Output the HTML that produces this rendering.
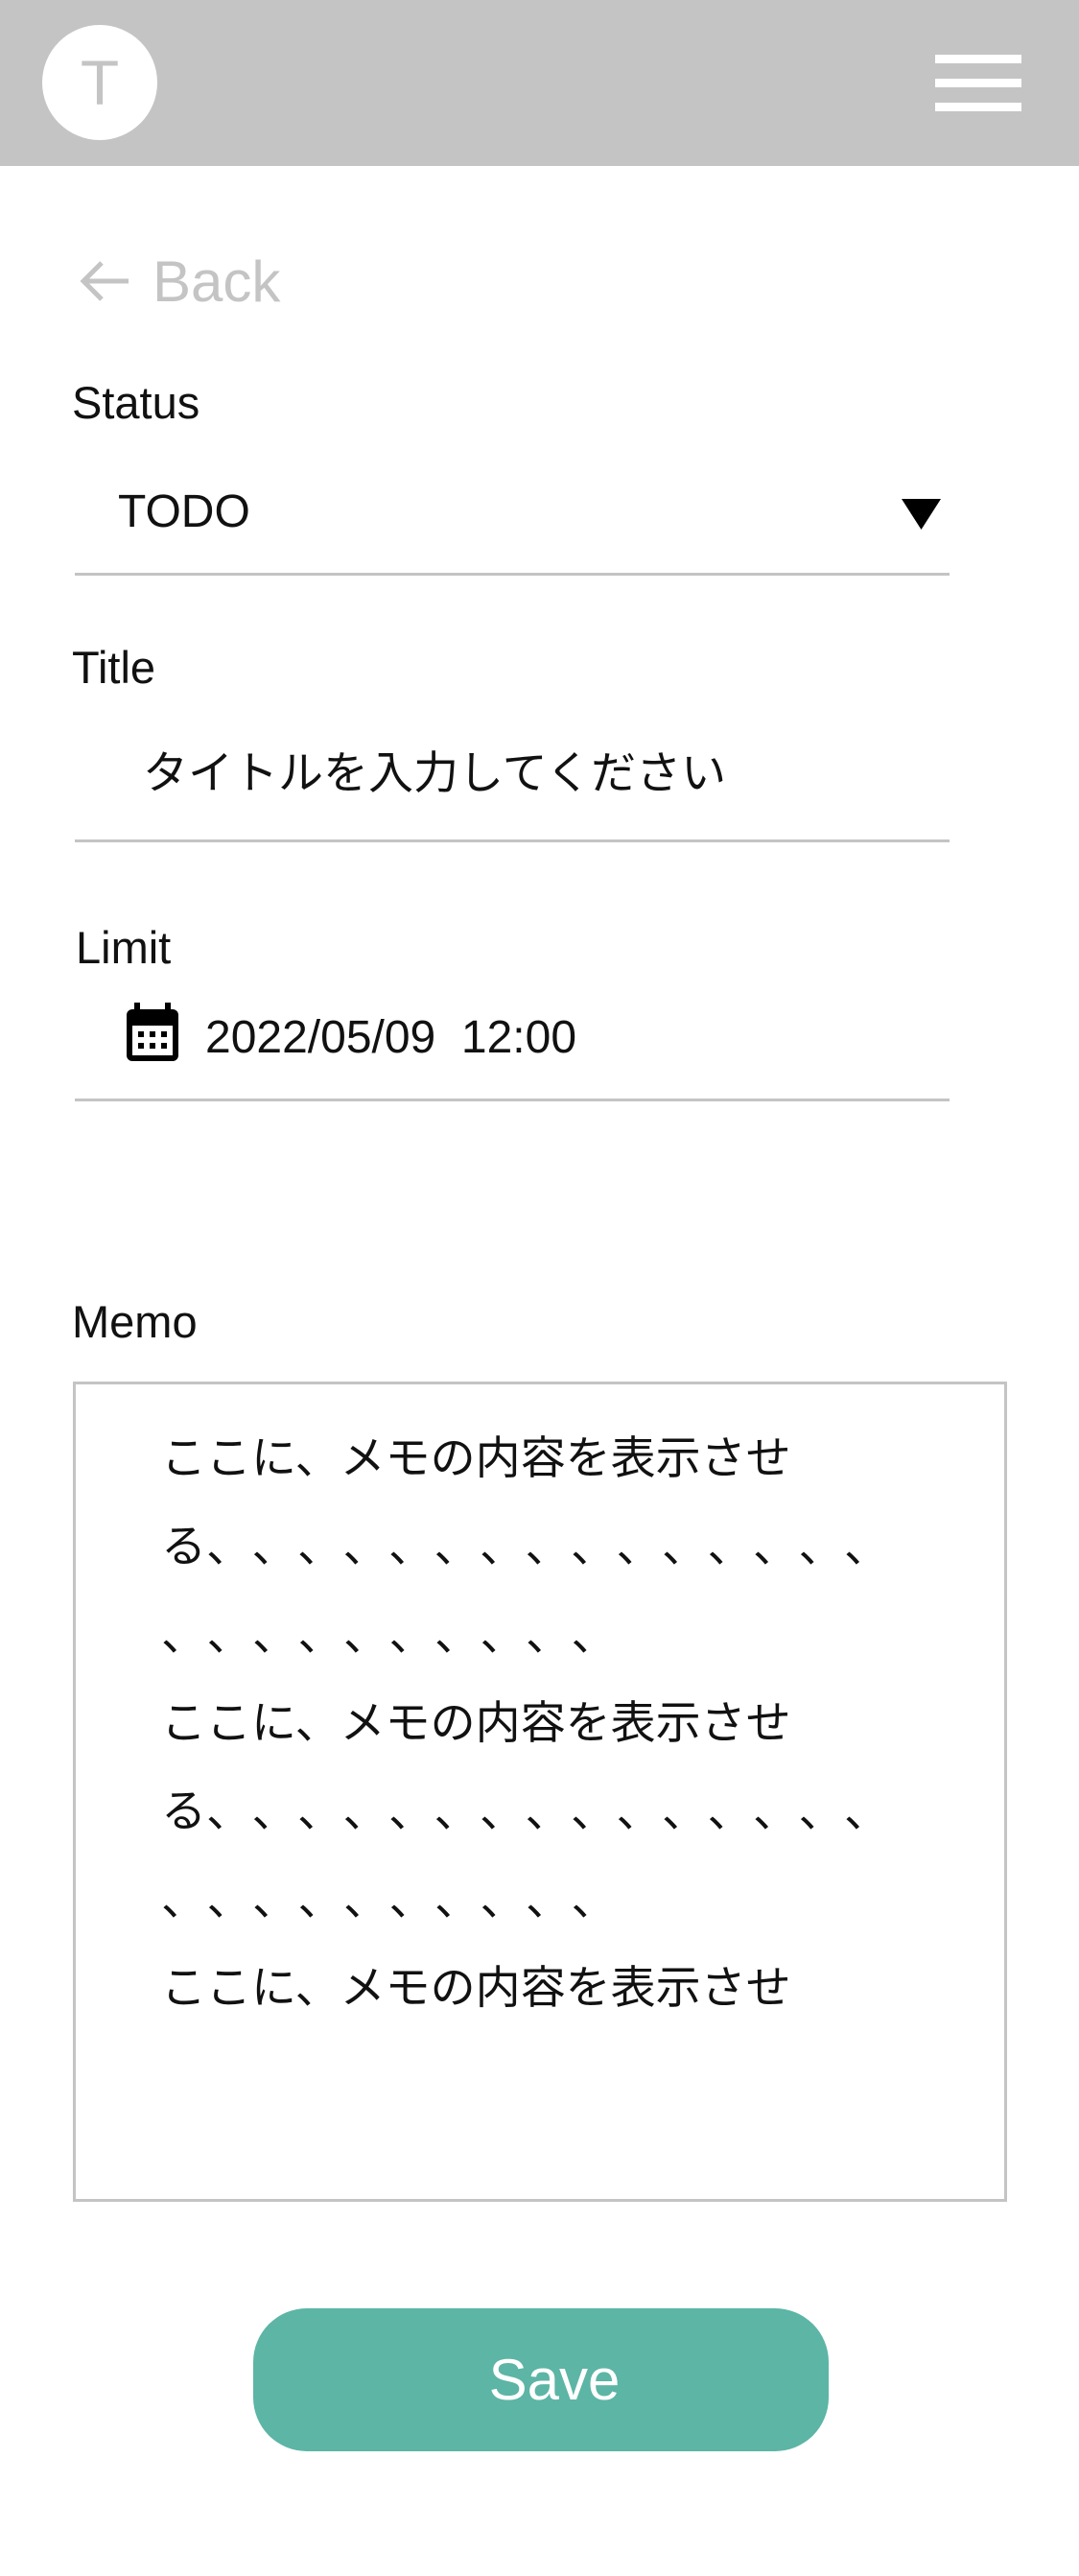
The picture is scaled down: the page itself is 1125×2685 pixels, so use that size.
<!DOCTYPE html>
<html><head><meta charset="utf-8"><style>
*{margin:0;padding:0;box-sizing:border-box}
body{width:1125px;height:2685px;background:#fff;position:relative;font-family:"Liberation Sans","Noto Sans CJK JP",sans-serif;color:#111;overflow:hidden}
.a{position:absolute;white-space:nowrap;line-height:1}
.hdr{position:absolute;left:0;top:0;width:1125px;height:173px;background:#c4c4c4}
.circ{position:absolute;left:44px;top:26px;width:120px;height:120px;border-radius:50%;background:#fff;color:#c4c4c4;font-size:66px;text-align:center;line-height:120px}
.bar{position:absolute;left:975px;width:90px;height:9px;background:#fff}
.line{position:absolute;left:78px;width:912px;height:3px;background:#c4c4c4}
.lbl{font-size:47px}
.val{font-size:48px}
.jp{font-family:"Noto Sans CJK JP",sans-serif}
.memo{position:absolute;left:76px;top:1440px;width:974px;height:855px;border:3px solid #c4c4c4}
.mt{position:absolute;left:168px;top:1470px;font-size:47px;line-height:92px;white-space:nowrap;font-family:"Noto Sans CJK JP",sans-serif}
.mt i{font-style:normal;display:inline-block;width:47.5px;text-align:left}
.btn{position:absolute;left:264px;top:2406px;width:600px;height:149px;border-radius:56px;background:#5cb5a5;color:#fff;font-size:60px;line-height:149px;text-align:center;padding-left:28px}
</style></head><body>
<div class="hdr">
 <div class="circ">T</div>
 <div class="bar" style="top:57px"></div>
 <div class="bar" style="top:82px"></div>
 <div class="bar" style="top:107px"></div>
</div>
<svg class="a" style="left:82px;top:270px" width="54" height="46" viewBox="0 0 54 46"><path d="M52 23H6M24 4L5 23L24 42" fill="none" stroke="#c4c4c4" stroke-width="5"/></svg>
<div class="a" style="left:159px;top:264px;font-size:60px;color:#c4c4c4">Back</div>
<div class="a lbl" style="left:75px;top:396px">Status</div>
<div class="a val" style="left:123px;top:510px">TODO</div>
<svg class="a" style="left:940px;top:520px" width="41" height="32"><path d="M0 0H41L20.5 32Z" fill="#000"/></svg>
<div class="line" style="top:597px"></div>
<div class="a lbl" style="left:75px;top:672px">Title</div>
<div class="a val jp" style="left:149px;top:778px;font-size:47px">タイトルを入力してください</div>
<div class="line" style="top:875px"></div>
<div class="a lbl" style="left:79px;top:964px">Limit</div>
<svg class="a" style="left:131px;top:1045px" width="56" height="62" viewBox="0 0 56 62"><rect x="9" y="0" width="6" height="10" fill="#000"/><rect x="41" y="0" width="6" height="10" fill="#000"/><rect x="1" y="7" width="54" height="54" rx="6" fill="#000"/><rect x="7" y="24" width="42" height="31" fill="#fff"/><g fill="#000"><rect x="13" y="30" width="6" height="6"/><rect x="25" y="30" width="6" height="6"/><rect x="37" y="30" width="6" height="6"/><rect x="13" y="42" width="6" height="6"/><rect x="25" y="42" width="6" height="6"/><rect x="37" y="42" width="6" height="6"/></g></svg>
<div class="a val" style="left:214px;top:1058px;white-space:pre">2022/05/09  12:00</div>
<div class="line" style="top:1145px"></div>
<div class="a lbl" style="left:75px;top:1354px">Memo</div>
<div class="memo"></div>
<div class="mt">ここに、メモの内容を表示させ<br>る<i>、</i><i>、</i><i>、</i><i>、</i><i>、</i><i>、</i><i>、</i><i>、</i><i>、</i><i>、</i><i>、</i><i>、</i><i>、</i><i>、</i><i>、</i><br><i>、</i><i>、</i><i>、</i><i>、</i><i>、</i><i>、</i><i>、</i><i>、</i><i>、</i><i>、</i><br>ここに、メモの内容を表示させ<br>る<i>、</i><i>、</i><i>、</i><i>、</i><i>、</i><i>、</i><i>、</i><i>、</i><i>、</i><i>、</i><i>、</i><i>、</i><i>、</i><i>、</i><i>、</i><br><i>、</i><i>、</i><i>、</i><i>、</i><i>、</i><i>、</i><i>、</i><i>、</i><i>、</i><i>、</i><br>ここに、メモの内容を表示させ</div>
<div class="btn">Save</div>
</body></html>
